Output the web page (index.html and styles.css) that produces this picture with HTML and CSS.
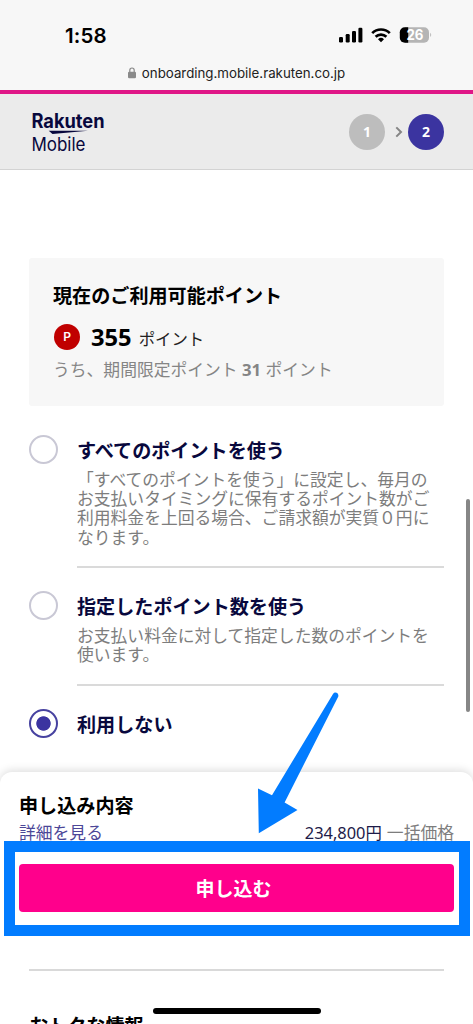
FILE: index.html
```html
<!DOCTYPE html>
<html lang="ja">
<head>
<meta charset="utf-8">
<meta name="viewport" content="width=device-width, initial-scale=1">
<title>楽天モバイル</title>
<link rel="stylesheet" href="styles.css">
</head>
<body>
<div class="screen">
  <div class="browser-bar">
    <div class="status">
      <span class="clock">1:58</span>
      <svg class="status-icons" width="96" height="20" viewBox="0 0 96 20">
        <rect x="1" y="12" width="4" height="5.5" rx="1.2"/>
        <rect x="7.7" y="9" width="4" height="8.5" rx="1.2"/>
        <rect x="14" y="6" width="4" height="11.5" rx="1.2"/>
        <rect x="20.4" y="2.7" width="4" height="14.8" rx="1.2"/>
        <g fill="none" stroke="#000" stroke-width="2.7">
          <path d="M34.2 8.1a12.6 12.6 0 0 1 17.6 0"/>
          <path d="M37.6 11.7a7.8 7.8 0 0 1 10.8 0"/>
        </g>
        <path d="M43 17.3l-3-3.1a4.3 4.3 0 0 1 6 0z"/>
        <path d="M67 2.2h19a5 5 0 0 1 5 5v5.5a5 5 0 0 1-5 5H67z" fill="#b5b5b5"/>
        <path d="M70.2 2.2v15.5h-3.4a5 5 0 0 1-5-5V7.2a5 5 0 0 1 5-5z"/>
        <path d="M92.2 7.8q2 2.1 0 4.3z" fill="#b5b5b5"/>
        <text x="77" y="15.2" text-anchor="middle" class="battery-text" textLength="17" lengthAdjust="spacingAndGlyphs">26</text>
      </svg>
    </div>
    <div class="address">
      <svg width="8" height="12" viewBox="0 0 8 12"><rect y="4.8" width="8" height="6.4" rx="1.2" fill="#8a8a8a"/><path d="M1.8 5V3.2a2.2 2.2 0 0 1 4.4 0V5" fill="none" stroke="#8a8a8a" stroke-width="1.2"/></svg>
      <span class="url">onboarding.mobile.rakuten.co.jp</span>
    </div>
  </div>

  <header class="site-header">
    <svg class="logo" width="76" height="46" viewBox="0 0 76 46" role="img" aria-label="Rakuten Mobile">
      <text x="-0.6" y="18.3" class="logo-main" textLength="73.2" lengthAdjust="spacingAndGlyphs">Rakuten</text>
      <path d="M16.7 20.8H56L20.5 24z"/>
      <text x="-0.6" y="40.6" class="logo-sub" textLength="54" lengthAdjust="spacingAndGlyphs">Mobile</text>
    </svg>
    <div class="steps">
      <span class="step">1</span>
      <svg width="8" height="12" viewBox="0 0 8 12"><path d="M1.3 1.4L6 6 1.3 10.6" fill="none" stroke="#858585" stroke-width="2"/></svg>
      <span class="step step-current">2</span>
    </div>
  </header>

  <main class="content">
    <section class="points">
      <h2 class="heading">現在のご利用可能ポイント</h2>
      <div class="balance">
        <span class="point-mark">P</span>
        <b class="amount">355</b>
        <span class="unit">ポイント</span>
      </div>
      <p class="limited">うち、期間限定ポイント <b>31</b> ポイント</p>
    </section>

    <div class="option option-all">
      <span class="radio"></span>
      <div class="option-body">
        <h3 class="heading">すべてのポイントを使う</h3>
        <p class="description">「すべてのポイントを使う」に設定し、毎月の<br>お支払いタイミングに保有するポイント数がご<br>利用料金を上回る場合、ご請求額が実質０円に<br>なります。</p>
      </div>
    </div>
    <div class="option option-part">
      <span class="radio"></span>
      <div class="option-body">
        <h3 class="heading">指定したポイント数を使う</h3>
        <p class="description">お支払い料金に対して指定した数のポイントを<br>使います。</p>
      </div>
    </div>
    <div class="option option-none">
      <span class="radio radio-on"></span>
      <div class="option-body option-last">
        <h3 class="heading">利用しない</h3>
      </div>
    </div>
  </main>

  <section class="summary">
    <h2 class="heading">申し込み内容</h2>
    <div class="summary-row">
      <a class="detail">詳細を見る</a>
      <span class="price"><span class="price-value">234,800円</span><span>一括価格</span></span>
    </div>
    <button class="apply">申し込む</button>
  </section>

  <section class="benefits">
    <h2 class="heading">おトクな情報</h2>
  </section>

  <div class="scrollbar"></div>
  <div class="home-indicator"></div>
  <div class="highlight"></div>
  <svg class="arrow" width="90" height="150" viewBox="0 0 90 150"><path d="M79 3.9Q80.4 1.9 82.6 2.8T84.3 6.4L30.6 112.4 43.5 120 4.8 143.3 4 98.5 18 105.2z" fill="#027cff"/></svg>
</div>
</body>
</html>
```
FILE: styles.css
```css
* { box-sizing: border-box; }
body { margin: 0; background: #fff; }
h2, h3, p { margin: 0; }
.screen {
  position: relative;
  width: 473px;
  height: 1024px;
  overflow: hidden;
  font-family: "Noto Sans", "Noto Sans CJK JP", sans-serif;
  color: #000;
  white-space: nowrap;
}
.heading { font-size: 19.1px; line-height: 26px; font-weight: 700; }

.browser-bar { height: 94px; background: #f7f7f7; border-bottom: 4px solid #df1687; }
.status {
  display: flex;
  justify-content: space-between;
  height: 62px;
  padding: 25px 39px 0 65px;
}
.clock { font: 600 20.5px/21px Inter, sans-serif; letter-spacing: 0.1px; }
.battery-text { font: 700 14px Inter, sans-serif; fill: #fff; }
.address {
  display: flex;
  align-items: center;
  justify-content: center;
  gap: 6px;
  height: 22px;
}
.url { font: 400 13.3px/20px Inter, sans-serif; color: #222; }

.site-header {
  display: flex;
  justify-content: space-between;
  height: 76px;
  padding: 16px 29px 0 32px;
  background: #ebebeb;
  border-bottom: 1px solid #d3d3d3;
}
.logo { fill: #08083d; }
.logo-main { font: 700 19.5px Inter, sans-serif; }
.logo-sub { font: 400 18.7px Inter, sans-serif; }
.steps { display: flex; align-items: center; height: 44px; }
.steps svg { margin: 0 5px 0 10px; }
.step {
  width: 36px;
  height: 36px;
  border-radius: 50%;
  background: #bdbdbd;
  color: #fff;
  font: 700 14px/36px "Noto Sans", sans-serif;
  text-align: center;
}
.step-current { background: #3b34a0; }

.content { height: 602px; padding: 88px 29px 0; }
.points {
  height: 148px;
  width: 415px;
  padding: 25px 24px 0;
  border-radius: 3px;
  background: #f7f7f7;
}
.balance { display: flex; align-items: center; height: 33px; margin-top: 11px; }
.point-mark {
  width: 26px;
  height: 26px;
  margin: 0 11px 0 1px;
  border-radius: 50%;
  background: #c00000;
  color: #fff;
  font: 600 12px/26px Inter, sans-serif;
  text-align: center;
}
.amount { font: 700 23.7px/30px "Open Sans", sans-serif; }
.unit { margin: 4px 0 0 7px; font-size: 16.4px; line-height: 26px; color: #222; }
.limited { margin-top: 4px; font-size: 16.8px; line-height: 26px; color: #858585; }

.option { display: flex; gap: 19px; }
.option-all { height: 156px; margin-top: 29px; }
.option-part { height: 118px; }
.option-none { height: 60px; }
.radio {
  flex: none;
  width: 29px;
  height: 29px;
  border: 2px solid #c9c8d5;
  border-radius: 50%;
}
.radio-on {
  border-color: #4742a0;
  background: radial-gradient(circle, #3b34a0 6.8px, transparent 7.6px);
}
.option-body { width: 367px; margin: 3px 0 15px; border-bottom: 2px solid #dadada; }
.option-all .option-body { height: 130px; }
.option-part .option-body { height: 92px; }
.option-last { border: 0; }
.option .heading { line-height: 26px; color: #08083d; }
.description { margin-top: 5.5px; font-size: 16.8px; line-height: 19.4px; color: #7d7d7d; }

.summary {
  position: relative;
  height: 165px;
  padding: 21px 19px 0;
  border-radius: 12px 12px 0 0;
  background: #fff;
  box-shadow: 0 -2px 8px rgba(0, 0, 0, .13);
  clip-path: inset(-15px 0 0 0);
}
.summary-row {
  display: flex;
  justify-content: space-between;
  height: 27px;
  font-size: 16.8px;
  line-height: 27px;
}
.detail { color: #4c4798; }
.price { display: flex; gap: 5px; color: #7d7d7d; font-size: 16.8px; }
.price-value { color: #1d1b49; font-size: 16.4px; }
.apply {
  display: block;
  width: 435px;
  height: 48px;
  margin-top: 18px;
  padding: 2px 6px 0 0;
  border: 0;
  border-radius: 4px;
  background: #ff008c;
  color: #fff;
  font: 700 19px/46px "Noto Sans", "Noto Sans CJK JP", sans-serif;
}
.benefits { width: 415px; height: 55px; margin: 32px 0 0 29px; padding-top: 42px; border-top: 2px solid #d9d9d9; }

.scrollbar { position: absolute; left: 466px; top: 499px; width: 4px; height: 213px; border-radius: 2px; background: #868686; }
.home-indicator { position: absolute; left: 153px; top: 1008px; width: 168px; height: 6px; border-radius: 3px; background: #000; }
.highlight { position: absolute; left: 4px; top: 841px; width: 466px; height: 95px; border: 11px solid #027cff; }
.arrow { position: absolute; left: 254px; top: 690px; }
```
